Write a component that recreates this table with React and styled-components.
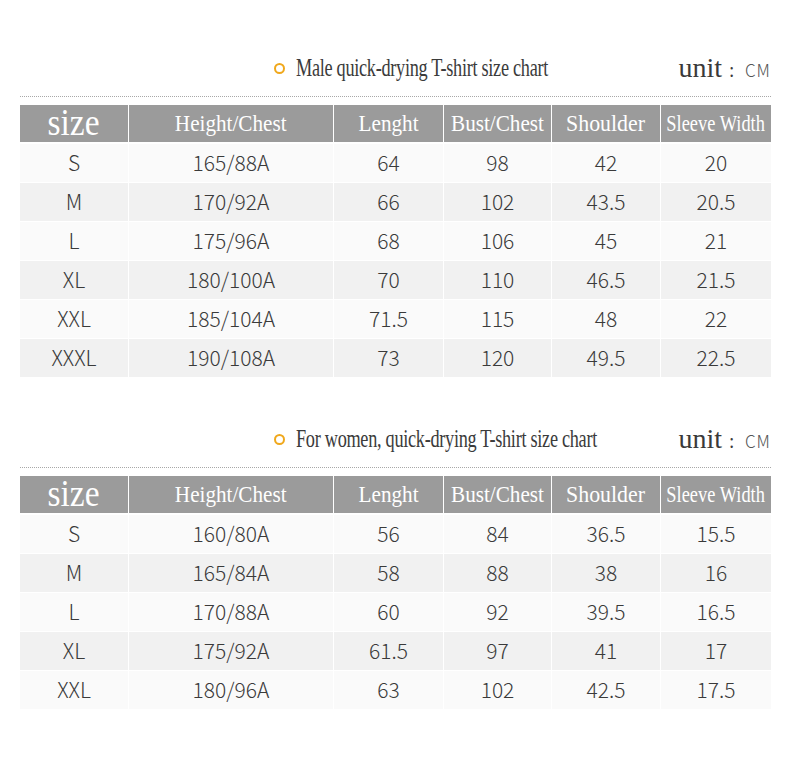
import React from 'react';
import styled, { createGlobalStyle } from 'styled-components';

const GlobalStyle = createGlobalStyle`
    html, body {
        margin: 0;
        padding: 0;
        background: #ffffff;
    }
`;

const male = [
    ['S', '165/88A', '64', '98', '42', '20'],
    ['M', '170/92A', '66', '102', '43.5', '20.5'],
    ['L', '175/96A', '68', '106', '45', '21'],
    ['XL', '180/100A', '70', '110', '46.5', '21.5'],
    ['XXL', '185/104A', '71.5', '115', '48', '22'],
    ['XXXL', '190/108A', '73', '120', '49.5', '22.5'],
];

const female = [
    ['S', '160/80A', '56', '84', '36.5', '15.5'],
    ['M', '165/84A', '58', '88', '38', '16'],
    ['L', '170/88A', '60', '92', '39.5', '16.5'],
    ['XL', '175/92A', '61.5', '97', '41', '17'],
    ['XXL', '180/96A', '63', '102', '42.5', '17.5'],
];

const headers = [
    { text: 'Height/Chest', squeeze: 0.92 },
    { text: 'Lenght', squeeze: 0.92 },
    { text: 'Bust/Chest', squeeze: 0.92 },
    { text: 'Shoulder', squeeze: 0.95 },
    { text: 'Sleeve Width', squeeze: 0.8 },
];

const SizeChart = ({ title, rows }) => (
    <Section>
        <TitleRow>
            <Title>
                <Dot />
                <TitleText>{title}</TitleText>
            </Title>
            <Unit>
                <UnitWord>unit</UnitWord>
                <UnitColon>:</UnitColon>
                <UnitCm>CM</UnitCm>
            </Unit>
        </TitleRow>
        <Dotted />
        <Table>
            <HeadCell>
                <SizeLabel>size</SizeLabel>
            </HeadCell>
            {headers.map((h) => (
                <HeadCell key={h.text}>
                    <HeadLabel $squeeze={h.squeeze}>{h.text}</HeadLabel>
                </HeadCell>
            ))}
            {rows.map((row, i) =>
                row.map((value, j) => (
                    <Cell key={i + '-' + j} $alt={i % 2 === 1}>
                        {value}
                    </Cell>
                ))
            )}
        </Table>
    </Section>
);

const App = () => (
    <Page>
        <GlobalStyle />
        <SizeChart title="Male quick-drying T-shirt size chart" rows={male} />
        <SizeChart title="For women, quick-drying T-shirt size chart" rows={female} />
    </Page>
);

export default App;

const Page = styled.div`
    width: 790px;
    padding: 50px 0 0 20px;
    box-sizing: border-box;
    display: flex;
    flex-direction: column;
    gap: 44px;
`;

const Section = styled.div`
    width: 751px;
    display: flex;
    flex-direction: column;
`;

const TitleRow = styled.div`
    height: 36px;
    display: flex;
    align-items: center;
    padding-left: 254px;
`;

const Title = styled.div`
    flex: 1;
    min-width: 0;
    display: flex;
    align-items: center;
`;

const Dot = styled.span`
    flex-shrink: 0;
    width: 7px;
    height: 7px;
    border: 2px solid #f0a81c;
    border-radius: 50%;
    margin-right: 11px;
`;

const TitleText = styled.span`
    display: inline-block;
    font-family: "Liberation Serif", serif;
    font-size: 25px;
    color: #3b3b3b;
    white-space: nowrap;
    letter-spacing: -0.4px;
    transform: scaleX(0.73);
    transform-origin: left center;
`;

const Unit = styled.div`
    flex-shrink: 0;
    display: flex;
    align-items: baseline;
    color: #3a3a3a;
`;

const UnitWord = styled.span`
    font-family: "Liberation Serif", serif;
    font-size: 28px;
`;

const UnitColon = styled.span`
    font-family: "Noto Sans", sans-serif;
    font-size: 18px;
    margin: 0 11px 0 7px;
`;

const UnitCm = styled.span`
    font-family: "Noto Sans CJK SC", "Noto Sans", sans-serif;
    font-weight: 300;
    font-size: 17px;
    letter-spacing: 1px;
    color: #555;
`;

const Dotted = styled.div`
    margin-top: 10px;
    border-top: 1px dotted #a8a8a8;
`;

const Table = styled.div`
    margin-top: 8px;
    display: grid;
    grid-template-columns: 108px 204px 109px 107px 108px 110px;
    grid-template-rows: 38px;
    grid-auto-rows: 38px;
    gap: 1px;
`;

const HeadCell = styled.div`
    background: #9b9b9b;
    color: #ffffff;
    display: flex;
    align-items: center;
    justify-content: center;
    margin-bottom: 1px;
`;

const HeadLabel = styled.span`
    display: inline-block;
    font-family: "Liberation Serif", serif;
    font-size: 23px;
    white-space: nowrap;
    transform: scaleX(${(p) => p.$squeeze});
`;

const SizeLabel = styled.span`
    display: inline-block;
    font-family: "Liberation Serif", serif;
    font-size: 38px;
    line-height: 38px;
    transform: scaleX(0.88) translateY(-2px);
`;

const Cell = styled.div`
    background: ${(p) => (p.$alt ? '#f1f1f1' : '#fafafa')};
    color: #3a3a3a;
    font-family: "Noto Sans CJK SC", "Noto Sans", sans-serif;
    font-weight: 300;
    font-size: 21px;
    padding-bottom: 3px;
    box-sizing: border-box;
    display: flex;
    align-items: center;
    justify-content: center;
`;
